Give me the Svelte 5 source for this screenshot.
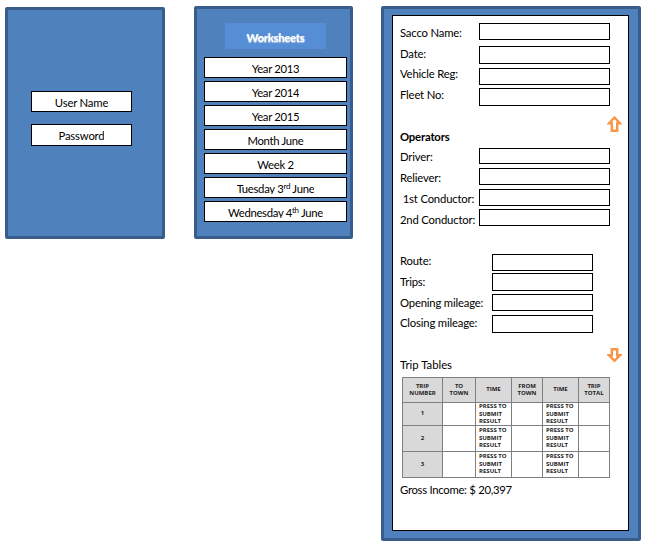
<script>
  const users = [
    { text: 'User Name', h: 21 },
    { text: 'Password', h: 22 }
  ];
  const sheets = [
    { a: 'Year 2013' },
    { a: 'Year 2014' },
    { a: 'Year 2015' },
    { a: 'Month June' },
    { a: 'Week 2' },
    { a: 'Tuesday 3', sup: 'rd', b: ' June' },
    { a: 'Wednesday 4', sup: 'th', b: ' June' }
  ];
  // Each field: label, label row height, gap above the box, box height
  const groups = [
    {
      name: 'vehicle',
      rows: [
        ['Sacco Name:', 21, 0, 17],
        ['Date:', 20, 6, 18],
        ['Vehicle Reg:', 21, 4, 17],
        ['Fleet No:', 21, 3, 18]
      ]
    },
    {
      name: 'crew',
      rows: [
        ['Driver:', 21, 0, 16],
        ['Reliever:', 21, 4, 17],
        ['\u00a01st Conductor:', 21, 4, 17],
        ['2nd Conductor:', 21, 3, 17]
      ]
    },
    {
      name: 'journey',
      rows: [
        ['Route:', 21, 0, 17],
        ['Trips:', 21, 2, 18],
        ['Opening mileage:', 20, 3, 17],
        ['Closing mileage:', 21, 4, 18]
      ]
    }
  ];
  const trips = [
    { n: 1, h: 23 },
    { n: 2, h: 26 },
    { n: 3, h: 26 }
  ];
</script>

{#snippet fields(group)}
  <div class="group {group.name}">
    <div class="labels">
      {#each group.rows as [label, lh]}
        <div class="label" style:height="{lh}px">{label}</div>
      {/each}
    </div>
    <div class="boxes">
      {#each group.rows as [, , gap, h]}
        <div class="box" style:margin-top="{gap}px" style:height="{h}px"></div>
      {/each}
    </div>
  </div>
{/snippet}

<main>
  <section class="panel login">
    {#each users as u}
      <div class="entry" style:height="{u.h}px"><span>{u.text}</span></div>
    {/each}
  </section>

  <section class="panel sheets">
    <h2>Worksheets</h2>
    {#each sheets as s}
      <div class="entry"><span>{s.a}{#if s.sup}<sup>{s.sup}</sup>{s.b}{/if}</span></div>
    {/each}
  </section>

  <section class="panel details">
    <div class="sheet">
      {@render fields(groups[0])}
      <svg class="arrow up" width="15" height="17" viewBox="0 0 15 17">
        <path d="M7.5 1.5 13 7.3H10.2V14.8H4.8V7.3H2Z" />
      </svg>
      <h3>Operators</h3>
      {@render fields(groups[1])}
      {@render fields(groups[2])}
      <svg class="arrow down" width="15" height="15" viewBox="0 0 15 15">
        <path d="M4.8 1.2H10.2V7.2H13L7.5 12.8 2 7.2H4.8Z" />
      </svg>
      <div class="caption">Trip Tables</div>
      <div class="table">
        <div class="tr head">
          <div>TRIP<br />NUMBER</div>
          <div>TO<br />TOWN</div>
          <div>TIME</div>
          <div>FROM<br />TOWN</div>
          <div>TIME</div>
          <div>TRIP<br />TOTAL</div>
        </div>
        {#each trips as t}
          <div class="tr" style:height="{t.h}px">
            <div class="num">{t.n}</div>
            <div></div>
            <div class="press">PRESS TO<br />SUBMIT<br />RESULT</div>
            <div></div>
            <div class="press">PRESS TO<br />SUBMIT<br />RESULT</div>
            <div></div>
          </div>
        {/each}
      </div>
      <div class="gross">Gross Income: $ 20,397</div>
    </div>
  </section>
</main>

<style>
  :global(body) {
    background: #fff;
  }
  main {
    box-sizing: border-box;
    width: 665px;
    height: 558px;
    padding: 6px 0 0 5px;
    display: flex;
    align-items: flex-start;
    overflow: hidden;
    font-family: Lato, 'Open Sans', sans-serif;
    font-size: 11.3px;
    line-height: 15px;
    letter-spacing: -0.18px;
    color: #000;
  }
  main * {
    box-sizing: border-box;
  }
  .panel {
    flex: none;
    background: #4f81bd;
    border: 3px solid #385d8a;
    border-radius: 2px;
  }
  .login {
    width: 160px;
    height: 232px;
    margin-top: 1px;
    padding: 81px 0 0 23px;
    display: flex;
    flex-direction: column;
    gap: 12px;
  }
  .entry {
    border: 1px solid #000;
    background: #fff;
    overflow: hidden;
    display: flex;
    justify-content: center;
    padding-top: 3px;
    white-space: pre;
  }
  .login .entry {
    width: 101px;
  }
  .sheets {
    width: 159px;
    height: 233px;
    margin-left: 29px;
    padding: 14px 3px 0 7px;
    display: flex;
    flex-direction: column;
    gap: 3px;
  }
  .sheets h2 {
    width: 101px;
    height: 26px;
    margin: 0 0 5px 21px;
    background: #558ed5;
    color: #fff;
    text-align: center;
    font-size: 11.3px;
    font-weight: 900;
    line-height: 29px;
    letter-spacing: -0.3px;
    text-shadow: 0 1px 1px #b8cce4;
  }
  .sheets .entry {
    flex: none;
    height: 21px;
    letter-spacing: -0.3px;
  }
  .entry span {
    height: 13px;
    overflow: hidden;
  }
  sup {
    font-size: 8px;
    line-height: 0;
    vertical-align: 4px;
  }
  .details {
    width: 260px;
    height: 535px;
    margin-left: 28px;
    padding: 6px 9px 7px 8px;
  }
  .sheet {
    width: 237px;
    height: 516px;
    border: 1px solid #000;
    background: #fff;
    padding: 7px 0 0 7px;
    display: flex;
    flex-direction: column;
    align-items: flex-start;
  }
  .group {
    display: flex;
    flex: none;
    width: 100%;
    height: 83px;
  }
  .labels {
    width: 79px;
    padding-top: 2px;
    flex: none;
    white-space: nowrap;
  }
  .box {
    width: 131px;
    border: 1px solid #000;
  }
  .journey .labels {
    width: 92px;
    padding-top: 0;
    margin-top: -1px;
  }
  .journey .box {
    width: 101px;
  }
  .crew .labels {
    padding-top: 1px;
  }
  .crew {
    height: 79px;
    margin-bottom: 27px;
  }
  .journey {
    height: 80px;
  }
  .arrow {
    flex: none;
    fill: #fff;
    stroke: #f79646;
    stroke-width: 2.4;
    margin-left: 207px;
  }
  .up {
    margin-top: 10px;
  }
  h3 {
    margin: -4px 0 4px;
    height: 15px;
    flex: none;
    font-size: 11.3px;
    line-height: 15px;
    font-weight: 700;
  }
  .down {
    margin-top: 14px;
  }
  .caption {
    height: 15px;
    margin-top: -6px;
    letter-spacing: 0;
    flex: none;
  }
  .table {
    flex: none;
    width: 208px;
    margin: 5px 0 0 2px;
    border-top: 1px solid #7f7f7f;
    border-left: 1px solid #7f7f7f;
    font-family: 'Open Sans', sans-serif;
    font-size: 6px;
    font-weight: 700;
    line-height: 7.5px;
    letter-spacing: 0;
    color: #222;
  }
  .tr {
    display: grid;
    grid-template-columns: 40px 33px 36px 31px 36px 31px;
  }
  .head {
    height: 25px;
    background: #d9d9d9;
  }
  .tr > div {
    border-right: 1px solid #7f7f7f;
    border-bottom: 1px solid #7f7f7f;
    display: grid;
    align-content: center;
    white-space: nowrap;
    overflow: hidden;
  }
  .tr.head > div,
  .tr > .num {
    display: flex;
    align-items: center;
    justify-content: center;
    text-align: center;
  }
  .tr > .num {
    background: #d9d9d9;
  }
  .tr > .press {
    display: block;
    padding-left: 3px;
  }
  .gross {
    margin-top: 4px;
    height: 15px;
    letter-spacing: -0.28px;
    flex: none;
  }
</style>
